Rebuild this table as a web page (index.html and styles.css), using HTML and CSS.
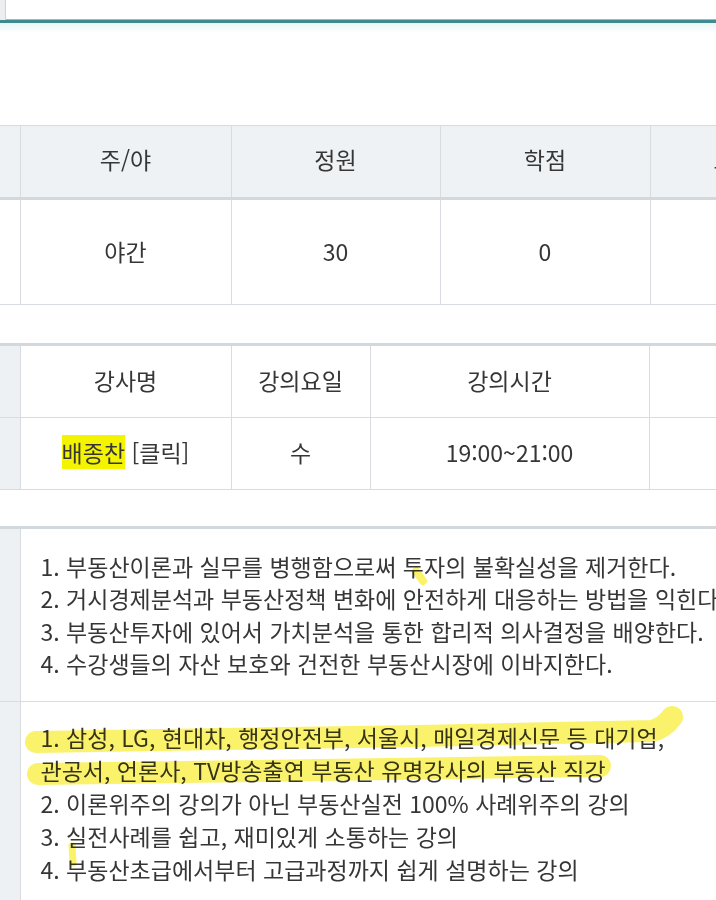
FILE: index.html
```html
<!DOCTYPE html>
<html lang="ko">
<head>
<meta charset="utf-8">
<title>강의 정보</title>
<link rel="stylesheet" href="styles.css">
</head>
<body>
<div class="page">
  <div class="topbar"><div class="topstub"></div></div>
  <div class="teal"></div>
  <div class="tealfade"></div>

  <table class="grid t1">
    <colgroup>
      <col class="c-stub"><col class="c-a"><col class="c-b"><col class="c-c"><col class="c-rest">
    </colgroup>
    <tr class="hrow">
      <td class="stub"></td><th>주/야</th><th>정원</th><th>학점</th><th class="cut">교재</th>
    </tr>
    <tr class="drow">
      <td class="stub plain"></td><td>야간</td><td>30</td><td>0</td><td></td>
    </tr>
  </table>

  <table class="grid t2">
    <colgroup>
      <col class="c-stub"><col class="c-a"><col class="c-day"><col class="c-time"><col class="c-rest">
    </colgroup>
    <tr class="row2">
      <td class="stub"></td><th>강사명</th><th>강의요일</th><th>강의시간</th><th></th>
    </tr>
    <tr class="row2">
      <td class="stub"></td><td><span class="mark">배종찬</span> [클릭]</td><td>수</td><td>19:00~21:00</td><td></td>
    </tr>
  </table>

  <table class="grid t3">
    <colgroup>
      <col class="c-stub"><col class="c-wide">
    </colgroup>
    <tr>
      <td class="stub"></td>
      <td class="text first">1. 부동산이론과 실무를 병행함으로써 투자의 불확실성을 제거한다.<br>2. 거시경제분석과 부동산정책 변화에 안전하게 대응하는 방법을 익힌다.<br>3. 부동산투자에 있어서 가치분석을 통한 합리적 의사결정을 배양한다.<br>4. 수강생들의 자산 보호와 건전한 부동산시장에 이바지한다.</td>
    </tr>
    <tr>
      <td class="stub"></td>
      <td class="text second">1. 삼성, LG, 현대차, 행정안전부, 서울시, 매일경제신문 등 대기업,<br>관공서, 언론사, TV방송출연 부동산 유명강사의 부동산 직강<br>2. 이론위주의 강의가 아닌 부동산실전 100% 사례위주의 강의<br>3. 실전사례를 쉽고, 재미있게 소통하는 강의<br>4. 부동산초급에서부터 고급과정까지 쉽게 설명하는 강의</td>
    </tr>
  </table>

  <svg class="marks" width="716" height="900" viewBox="0 0 716 900" aria-hidden="true">
    <path class="hl" d="M36 742 L420 736 L652 731 Q664 728 672 717" stroke-width="22"/>
    <path class="hl" d="M38 774 L320 770 L600 766" stroke-width="22"/>
    <path class="hl" d="M416 571 L423 581" stroke-width="8"/>
    <path class="hl" d="M72 846 L73 863" stroke-width="7"/>
  </svg>
</div>
</body>
</html>
```
FILE: styles.css
```css
html, body {
  margin: 0;
  padding: 0;
  background: #ffffff;
}

body {
  font-family: "Noto Sans CJK KR", "Noto Sans", sans-serif;
  color: #363636;
  overflow: hidden;
}

.page {
  position: relative;
  width: 716px;
  height: 900px;
  overflow: hidden;
}

.topbar {
  height: 20px;
  display: flex;
}

.topstub {
  width: 5px;
  background: #eceef0;
  border-right: 1px solid #cdd1d5;
}

.teal {
  height: 3px;
  background: #3d8b90;
  box-shadow: 0 -1px 0 #8fc2c4;
}

.tealfade {
  height: 10px;
  background: linear-gradient(#eaf5f5, #ffffff);
  margin-bottom: 92px;
}

.grid {
  width: 900px;
  table-layout: fixed;
  border-collapse: collapse;
  font-size: 23px;
}

.c-stub { width: 20px; }
.c-a { width: 211px; }
.c-b { width: 209px; }
.c-c { width: 210px; }
.c-day { width: 139px; }
.c-time { width: 279px; }

.grid th,
.grid td {
  border: 1px solid #d8dbdf;
  text-align: center;
  font-weight: 400;
  padding: 0;
}

.grid .stub {
  background: #eef1f4;
  border-left: none;
}

.grid .stub.plain {
  background: #ffffff;
}

.t1 .hrow th,
.t1 .hrow td {
  background: #eff2f5;
  height: 66px;
  padding-bottom: 5px;
  border-bottom: 3px solid #d3d8dc;
}

.t1 .hrow .cut {
  text-align: left;
  padding-left: 63px;
}

.t1 .drow td {
  height: 101px;
  padding-bottom: 3px;
}

.t2 {
  margin-top: 38px;
}

.t2 tr:first-child th,
.t2 tr:first-child td {
  border-top: 3px solid #d3d8dc;
}

.t2 .row2 th,
.t2 .row2 td {
  height: 68px;
  padding-bottom: 3px;
}

.mark {
  background: #f4f400;
}

.t3 {
  margin-top: 36px;
}

.t3 tr:first-child td {
  border-top: 3px solid #d3d8dc;
}

.t3 .text {
  text-align: left;
  white-space: nowrap;
  line-height: 32.4px;
  padding: 21px 20px 21px;
}

.t3 .second {
  line-height: 33px;
  padding-top: 19px;
}

.marks {
  position: absolute;
  left: 0;
  top: 0;
  pointer-events: none;
  mix-blend-mode: multiply;
}

.hl {
  fill: none;
  stroke: #fbf26c;
  stroke-linecap: round;
  stroke-linejoin: round;
}
```
